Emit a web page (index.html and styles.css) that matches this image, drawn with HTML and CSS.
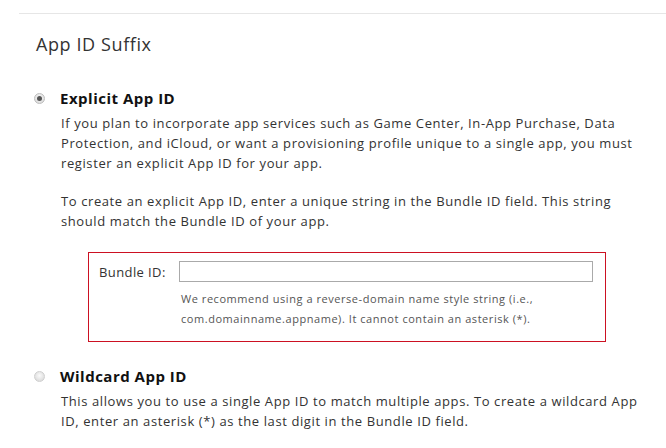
FILE: index.html
```html
<!DOCTYPE html>
<html>
<head>
  <meta charset="utf-8">
  <title>App ID Suffix</title>
  <link rel="stylesheet" href="styles.css">
</head>
<body>
  <div class="section">
    <h2 class="section-title">App ID Suffix</h2>

    <div class="option">
      <label class="option-head">
        <span class="radio checked"></span>
        <span class="option-name">Explicit App ID</span>
      </label>
      <div class="option-body">
        <p>If you plan to incorporate app services such as Game Center, In-App Purchase, Data Protection, and iCloud, or want a provisioning profile unique to a single app, you must register an explicit App ID for your app.</p>
        <p>To create an explicit App ID, enter a unique string in the Bundle ID field. This string should match the Bundle ID of your app.</p>
      </div>
      <div class="bundle-box">
        <div class="bundle-row">
          <label for="bundleId">Bundle ID:</label>
          <input type="text" id="bundleId">
        </div>
        <p class="hint">We recommend using a reverse-domain name style string (i.e., com.domainname.appname). It cannot contain an asterisk (*).</p>
      </div>
    </div>

    <div class="option option-next">
      <label class="option-head">
        <span class="radio"></span>
        <span class="option-name">Wildcard App ID</span>
      </label>
      <div class="option-body">
        <p>This allows you to use a single App ID to match multiple apps. To create a wildcard App ID, enter an asterisk (*) as the last digit in the Bundle ID field.</p>
      </div>
    </div>
  </div>
</body>
</html>
```

FILE: styles.css
```css
body {
  margin: 0;
  background: #fff;
  font-family: 'Open Sans', 'DejaVu Sans', sans-serif;
  color: #333;
}

.section {
  margin: 13px 0 0 19px;
  border-top: 1px solid #e6e6e6;
  padding: 18px 0 0 17px;
}

.section-title {
  margin: 0;
  font-size: 18px;
  font-weight: normal;
  line-height: 24px;
  letter-spacing: 0.6px;
  color: #333;
}

.option {
  margin-top: 32px;
}

.option-next {
  margin-top: 24px;
}

.option-head {
  display: flex;
  align-items: center;
  gap: 15px;
  height: 20px;
}

.radio {
  width: 11px;
  height: 11px;
  border-radius: 50%;
  background: radial-gradient(circle at 50% 40%, #fafafa, #d4d4d4);
  border: 1px solid #cfcfcf;
  box-sizing: border-box;
  display: flex;
  align-items: center;
  justify-content: center;
  margin-left: -2px;
}

.radio.checked {
  border-color: #bdbdbd;
}

.radio.checked::after {
  content: "";
  width: 5px;
  height: 5px;
  border-radius: 50%;
  background: #555;
}

.option-name {
  font-size: 15px;
  font-weight: bold;
  letter-spacing: 0.5px;
  color: #111;
}

.option-body {
  padding-left: 25px;
  margin-top: 5px;
  font-size: 13px;
  line-height: 20px;
  letter-spacing: 0.6px;
  color: #333;
}

.option-body p {
  margin: 0 0 18px;
  max-width: 589px;
}

.bundle-box {
  width: 518px;
  height: 90px;
  margin: 21px 0 0 52px;
  border: 1px solid #cc1122;
  box-sizing: border-box;
  padding: 8px 0 0 10px;
}

.bundle-row {
  display: flex;
  align-items: center;
  gap: 8px;
}

.bundle-row label {
  font-size: 13px;
  letter-spacing: 0.4px;
  color: #333;
  width: 72px;
}

.bundle-row input {
  width: 414px;
  height: 21px;
  box-sizing: border-box;
  border: 1px solid #aaa;
  padding: 0 4px;
  margin: 0;
}

.hint {
  margin: 7px 0 0 82px;
  font-size: 11px;
  line-height: 20px;
  letter-spacing: 0.55px;
  color: #555;
}
```
